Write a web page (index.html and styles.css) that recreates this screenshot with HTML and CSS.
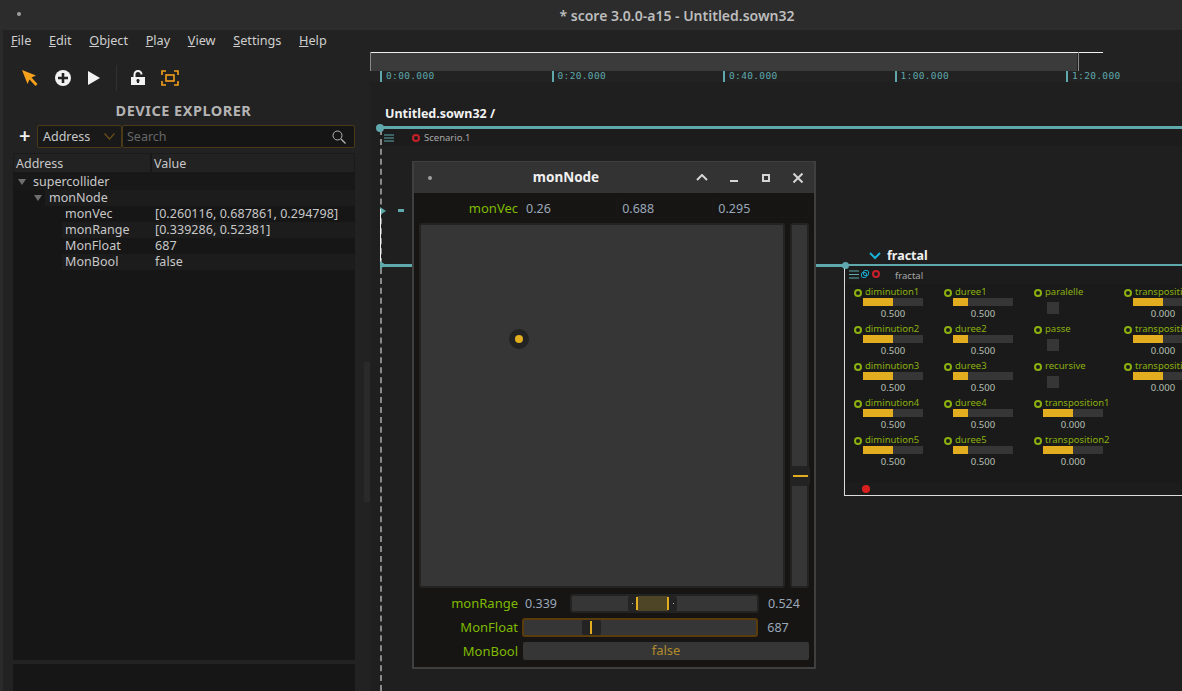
FILE: index.html
```html
<!DOCTYPE html>
<html lang="en">
<head>
    <meta charset="UTF-8">
    <title>score</title>
    <link rel="stylesheet" href="styles.css">
</head>
<body>
    <header class="titlebar">
        <span class="title-dot"></span>
        <span class="title-text">* score 3.0.0-a15 - Untitled.sown32</span>
    </header>

    <div class="app">
        <aside class="side">
            <nav class="menu">
                <span><u>F</u>ile</span>
                <span><u>E</u>dit</span>
                <span><u>O</u>bject</span>
                <span><u>P</u>lay</span>
                <span><u>V</u>iew</span>
                <span><u>S</u>ettings</span>
                <span><u>H</u>elp</span>
            </nav>

            <div class="toolbar">
                <svg class="tool" width="18" height="18" viewBox="0 0 18 18"><path d="M1 1 L15 6.5 L10.5 8.5 L16.5 15 L14.5 17 L8.5 10.5 L6.5 15 Z" fill="#f5a11c"/></svg>
                <svg class="tool" width="18" height="18" viewBox="0 0 18 18"><circle cx="9" cy="9" r="8" fill="#f2f2f2"/><path d="M9 4 V14 M4 9 H14" stroke="#222" stroke-width="2.6"/></svg>
                <svg class="tool" width="14" height="16" viewBox="0 0 14 16"><path d="M1 1 L13 8 L1 15 Z" fill="#f2f2f2"/></svg>
                <span class="tool-sep"></span>
                <svg class="tool" width="16" height="16" viewBox="0 0 16 16"><path d="M4.5 7 V4.5 A3.5 3.5 0 0 1 11.5 4.5" fill="none" stroke="#f2f2f2" stroke-width="2"/><path d="M1 7 H15 V15 H1 Z M8 9 A1.5 1.5 0 0 0 7 11.7 V13 H9 V11.7 A1.5 1.5 0 0 0 8 9 Z" fill="#f2f2f2" fill-rule="evenodd"/></svg>
                <svg class="tool" width="18" height="16" viewBox="0 0 18 16"><path d="M1 5 V1 H5 M13 1 H17 V5 M17 11 V15 H13 M5 15 H1 V11" fill="none" stroke="#f5a11c" stroke-width="1.6"/><rect x="5" y="5" width="8" height="6" fill="none" stroke="#f5a11c" stroke-width="1.6"/></svg>
            </div>

            <h2 class="side-title">DEVICE EXPLORER</h2>

            <div class="search-row">
                <span class="add-btn">+</span>
                <div class="select">Address
                    <svg width="11" height="7" viewBox="0 0 11 7"><path d="M0.5 0.5 L5.5 6 L10.5 0.5" fill="none" stroke="#6b4d16" stroke-width="1.2"/></svg>
                </div>
                <div class="search">Search
                    <svg width="14" height="14" viewBox="0 0 14 14"><circle cx="5.5" cy="5.5" r="4.5" fill="none" stroke="#b5b5b5"/><path d="M9 9 L13.5 13.5" stroke="#b5b5b5" stroke-width="1.3"/></svg>
                </div>
            </div>

            <div class="tree">
                <div class="tree-head">
                    <span class="col-addr">Address</span>
                    <span class="col-val">Value</span>
                </div>
                <div class="tree-row depth0"><i class="arrow"></i>supercollider</div>
                <div class="tree-row depth1"><i class="arrow"></i><span class="row-fill">monNode</span></div>
                <div class="tree-row depth2"><span class="leaf dark"><span class="leaf-name">monVec</span><span>[0.260116, 0.687861, 0.294798]</span></span></div>
                <div class="tree-row depth2"><span class="leaf"><span class="leaf-name">monRange</span><span>[0.339286, 0.52381]</span></span></div>
                <div class="tree-row depth2"><span class="leaf dark"><span class="leaf-name">MonFloat</span><span>687</span></span></div>
                <div class="tree-row depth2"><span class="leaf"><span class="leaf-name">MonBool</span><span>false</span></span></div>
            </div>
            <div class="side-bottom"></div>
            <span class="side-scroll"></span>
        </aside>

        <main class="timeline">
            <div class="minimap"><div class="minimap-bar"></div></div>
            <div class="ruler">
                <span class="tick">0:00.000</span>
                <span class="tick">0:20.000</span>
                <span class="tick">0:40.000</span>
                <span class="tick">1:00.000</span>
                <span class="tick">1:20.000</span>
            </div>
            <div class="crumb">Untitled.sown32 /</div>

            <section class="scenario">
                <div class="scenario-head">
                    <svg class="burger" width="10" height="8" viewBox="0 0 10 8"><path d="M0 1 H10 M0 4 H10 M0 7 H10" stroke="#5fa8ab"/></svg>
                    <span class="rec-ring"></span>
                    <span class="scenario-name">Scenario.1</span>
                </div>

                <!-- things on the scenario canvas -->
                <span class="dash-line"></span>
                <span class="start-dot"></span>
                <span class="state-mark top"></span>
                <span class="state-dash"></span>
                <span class="white-line"></span>
                <span class="state-mark low"></span>
                <span class="teal-line"></span>

                <div class="proc-title">
                    <svg width="12" height="8" viewBox="0 0 12 8"><path d="M1 1 L6 6 L11 1" fill="none" stroke="#19b1d8" stroke-width="2"/></svg>
                    fractal
                </div>

                <div class="process">
                    <span class="proc-dot"></span>
                    <div class="proc-head">
                        <svg width="10" height="9" viewBox="0 0 10 9"><path d="M0 1 H10 M0 4.5 H10 M0 8 H10" stroke="#5fa8ab"/></svg>
                        <svg width="8" height="8" viewBox="0 0 8 8"><rect x="0.5" y="2.5" width="5" height="5" rx="1.5" fill="none" stroke="#19a5c9"/><rect x="2.5" y="0.5" width="5" height="5" rx="1.5" fill="none" stroke="#19a5c9"/></svg>
                        <span class="rec-ring small"></span>
                        <span class="proc-name">fractal</span>
                    </div>
                    <div class="ports">
                        <div class="port"><i class="ring"></i><span class="port-name">diminution1</span><div class="bar"><b class="half"></b></div><div class="port-val">0.500</div></div>
                        <div class="port"><i class="ring"></i><span class="port-name">diminution2</span><div class="bar"><b class="half"></b></div><div class="port-val">0.500</div></div>
                        <div class="port"><i class="ring"></i><span class="port-name">diminution3</span><div class="bar"><b class="half"></b></div><div class="port-val">0.500</div></div>
                        <div class="port"><i class="ring"></i><span class="port-name">diminution4</span><div class="bar"><b class="half"></b></div><div class="port-val">0.500</div></div>
                        <div class="port"><i class="ring"></i><span class="port-name">diminution5</span><div class="bar"><b class="half"></b></div><div class="port-val">0.500</div></div>

                        <div class="port"><i class="ring"></i><span class="port-name">duree1</span><div class="bar"><b class="quarter"></b></div><div class="port-val">0.500</div></div>
                        <div class="port"><i class="ring"></i><span class="port-name">duree2</span><div class="bar"><b class="quarter"></b></div><div class="port-val">0.500</div></div>
                        <div class="port"><i class="ring"></i><span class="port-name">duree3</span><div class="bar"><b class="quarter"></b></div><div class="port-val">0.500</div></div>
                        <div class="port"><i class="ring"></i><span class="port-name">duree4</span><div class="bar"><b class="quarter"></b></div><div class="port-val">0.500</div></div>
                        <div class="port"><i class="ring"></i><span class="port-name">duree5</span><div class="bar"><b class="quarter"></b></div><div class="port-val">0.500</div></div>

                        <div class="port"><i class="ring"></i><span class="port-name">paralelle</span><div class="check"></div></div>
                        <div class="port"><i class="ring"></i><span class="port-name">passe</span><div class="check"></div></div>
                        <div class="port"><i class="ring"></i><span class="port-name">recursive</span><div class="check"></div></div>
                        <div class="port"><i class="ring"></i><span class="port-name">transposition1</span><div class="bar"><b class="half"></b></div><div class="port-val">0.000</div></div>
                        <div class="port"><i class="ring"></i><span class="port-name">transposition2</span><div class="bar"><b class="half"></b></div><div class="port-val">0.000</div></div>

                        <div class="port"><i class="ring"></i><span class="port-name">transposition3</span><div class="bar"><b class="half"></b></div><div class="port-val">0.000</div></div>
                        <div class="port"><i class="ring"></i><span class="port-name">transposition4</span><div class="bar"><b class="half"></b></div><div class="port-val">0.000</div></div>
                        <div class="port"><i class="ring"></i><span class="port-name">transposition5</span><div class="bar"><b class="half"></b></div><div class="port-val">0.000</div></div>
                    </div>
                    <div class="proc-foot"><span class="rec-dot"></span></div>
                </div>
            </section>
        </main>
    </div>

    <div class="window">
        <div class="win-title">
            <span class="title-dot"></span>
            <span class="win-name">monNode</span>
            <span class="win-btn"><svg width="12" height="7" viewBox="0 0 12 7"><path d="M1 6 L6 1 L11 6" fill="none" stroke="#d5d5d5" stroke-width="2"/></svg></span>
            <span class="win-btn"><svg width="8" height="8" viewBox="0 0 8 8"><rect width="8" height="2" y="6" fill="#d5d5d5"/></svg></span>
            <span class="win-btn"><svg width="8" height="8" viewBox="0 0 8 8"><rect x="1" y="1" width="6" height="6" fill="none" stroke="#d5d5d5" stroke-width="2"/></svg></span>
            <span class="win-btn"><svg width="10" height="10" viewBox="0 0 10 10"><path d="M0.5 0.5 L9.5 9.5 M9.5 0.5 L0.5 9.5" stroke="#d5d5d5" stroke-width="2"/></svg></span>
        </div>
        <div class="win-body">
            <div class="vec-row">
                <span class="ctl-label">monVec</span>
                <span class="num">0.26</span>
                <span class="num">0.688</span>
                <span class="num">0.295</span>
            </div>
            <div class="pad-row">
                <div class="xy-pad"><span class="pad-knob"></span></div>
                <div class="v-slider"><span class="v-knob"></span></div>
            </div>
            <div class="ctl-row">
                <span class="ctl-label">monRange</span>
                <span class="num-side first">0.339</span>
                <div class="track range-track">
                    <div class="range-knob"><i></i><i></i></div>
                </div>
                <span class="num-side">0.524</span>
            </div>
            <div class="ctl-row">
                <span class="ctl-label">MonFloat</span>
                <div class="track float-track"><div class="float-knob"><i></i></div></div>
                <span class="num-side">687</span>
            </div>
            <div class="ctl-row">
                <span class="ctl-label">MonBool</span>
                <div class="toggle">false</div>
            </div>
        </div>
    </div>
</body>
</html>
```

FILE: styles.css
```css
* {
    box-sizing: border-box;
}

html, body {
    height: 100%;
}

body {
    margin: 0;
    overflow: hidden;
    display: flex;
    flex-direction: column;
    position: relative;
    background-color: #222222;
    color: #c8c8c8;
    font-family: "Noto Sans", "Open Sans", sans-serif;
    font-size: 12.5px;
}

/* title bar */
.titlebar {
    height: 30px;
    flex-shrink: 0;
    display: flex;
    align-items: center;
    justify-content: center;
    position: relative;
    background-color: #2c2c2c;
}
.titlebar .title-dot {
    position: absolute;
    left: 17px;
    top: 12px;
}
.title-dot {
    width: 4px;
    height: 4px;
    border-radius: 50%;
    background-color: #a0a0a0;
}
.title-text {
    margin-left: 172px;
    font-size: 14px;
    font-weight: 600;
    color: #bdbdbd;
}

.app {
    flex: 1;
    display: flex;
    min-height: 0;
    border-left: 3px solid #2a2a2a;
}

/* left panel */
.side {
    position: relative;
    width: 367px;
    flex-shrink: 0;
    display: flex;
    flex-direction: column;
    padding-right: 15px;
    background-color: #222222;
}
.side-scroll {
    position: absolute;
    left: 361px;
    top: 332px;
    width: 6px;
    height: 140px;
    background-color: #2a2a2a;
}
.menu {
    height: 20px;
    display: flex;
    align-items: center;
    gap: 17.6px;
    padding-left: 8px;
    font-size: 12.7px;
    color: #cfcfcf;
}
.toolbar {
    height: 38px;
    margin-top: 9px;
    display: flex;
    align-items: center;
    padding-left: 18px;
}
.tool {
    margin-right: 15px;
}
.tool-sep {
    width: 1px;
    height: 26px;
    margin: 0 13px 0 0;
    background-color: #303030;
}
.side-title {
    margin: 4px 0 0;
    text-align: center;
    font-size: 14.5px;
    line-height: 18px;
    font-weight: 700;
    letter-spacing: 0.5px;
    color: #b4b4b4;
    padding-left: 9px;
}
.search-row {
    margin-top: 6px;
    height: 23px;
    display: flex;
    align-items: stretch;
}
.add-btn {
    width: 34px;
    padding-left: 16px;
    font-size: 20px;
    line-height: 21px;
    font-weight: 600;
    color: #f2f2f2;
}
.select {
    width: 85px;
    display: flex;
    align-items: center;
    justify-content: space-between;
    padding: 0 6px 0 5px;
    border: 1px solid #4a3a17;
    border-radius: 2px;
    background-color: #191919;
    color: #c8c8c8;
}
.search {
    flex: 1;
    display: flex;
    align-items: center;
    justify-content: space-between;
    padding: 0 8px 0 4px;
    border: 1px solid #4a3a17;
    border-radius: 2px;
    background-color: #151515;
    color: #666666;
}
.tree {
    flex: 1;
    margin: 5px 0 0 10px;
    background-color: #161616;
    line-height: 16px;
}
.tree-head {
    height: 20px;
    display: flex;
    align-items: flex-end;
    background-color: #222222;
    border: 1px solid #1a1a1a;
}
.col-addr {
    width: 138px;
    height: 100%;
    padding: 2px 0 0 2px;
    border-right: 2px solid #181818;
}
.col-val {
    padding-left: 2px;
}
.tree-row {
    height: 16px;
    display: flex;
    align-items: center;
    white-space: nowrap;
}
.arrow {
    width: 0;
    height: 0;
    margin-right: 5px;
    border-left: 4px solid transparent;
    border-right: 4px solid transparent;
    border-top: 6px solid #6f6f6f;
}
.depth0 {
    padding-left: 5px;
    margin-top: 1px;
    background-color: #181818;
}
.depth0 .arrow {
    margin-right: 7px;
}
.depth1 {
    padding-left: 21px;
}
.depth1 .arrow {
    margin-right: 3px;
}
.row-fill {
    flex: 1;
    height: 16px;
    padding-left: 4px;
    background-color: #1c1c1c;
}
.depth2 {
    padding-left: 49px;
}
.leaf {
    flex: 1;
    display: flex;
    height: 16px;
    letter-spacing: 0.05px;
    background-color: #1c1c1c;
}
.leaf.dark {
    background-color: #161616;
}
.leaf-name {
    width: 93px;
    padding-left: 3px;
}
.side-bottom {
    height: 27px;
    margin: 4px 0 0 10px;
    background-color: #161616;
}

/* timeline */
.timeline {
    flex: 1;
    min-width: 0;
    display: flex;
    flex-direction: column;
    background-color: #1f1f1f;
}
.minimap {
    height: 42px;
    padding-top: 22px;
    background-color: #222222;
}
.minimap-bar {
    position: relative;
    width: 707px;
    height: 19px;
    background-color: #3b3b3b;
}
/* white top edge runs past the grey bar */
.minimap-bar::before {
    content: "";
    position: absolute;
    left: 0;
    top: 0;
    width: 733px;
    height: 1px;
    background-color: #f0f0f0;
}
.minimap-bar::after {
    content: "";
    position: absolute;
    left: 0;
    top: 0;
    width: 707px;
    height: 19px;
    border-left: 1px solid #8a8a8a;
    border-right: 1px solid #8a8a8a;
}
.ruler {
    height: 11px;
    margin-top: -1px;
    padding-left: 10px;
    display: flex;
    background-color: #222222;
}
.tick {
    width: 171.5px;
    flex-shrink: 0;
    padding-left: 4px;
    border-left: 2px solid #5fa8ab;
    font-family: "DejaVu Sans Mono", monospace;
    font-size: 9.5px;
    line-height: 10px;
    letter-spacing: 0.35px;
    color: #5fa8ab;
}
.crumb {
    margin-top: 23px;
    height: 21px;
    padding-left: 15px;
    font-size: 12.5px;
    line-height: 18px;
    font-weight: 700;
    color: #f2f2f2;
}
.scenario {
    flex: 1;
    position: relative;
    border-top: 3px solid #5fa8ab;
    margin-left: 10px;
}
.scenario-head {
    height: 17px;
    display: flex;
    align-items: center;
    padding-left: 4px;
    background-color: #1c1c1c;
}
.burger {
    margin-right: 18px;
}
.rec-ring {
    width: 8px;
    height: 8px;
    border-radius: 50%;
    border: 2px solid #c8202a;
}
.scenario-name {
    margin-left: 4px;
    font-size: 9.5px;
    color: #a8a8a8;
}
.start-dot {
    position: absolute;
    left: -4px;
    top: -5px;
    width: 8px;
    height: 8px;
    border-radius: 50%;
    background-color: #5fa8ab;
}
.dash-line {
    position: absolute;
    left: 0;
    top: 0;
    bottom: 0;
    border-left: 2px dashed #8a8a8a;
}
.state-mark {
    position: absolute;
    left: 0;
    width: 0;
    height: 0;
    border-top: 4px solid transparent;
    border-bottom: 4px solid transparent;
    border-left: 6px solid #5fa8ab;
}
.state-mark.top {
    top: 78px;
}
.state-mark.low {
    top: 132px;
}
.state-dash {
    position: absolute;
    left: 18px;
    top: 80px;
    width: 6px;
    height: 3px;
    background-color: #5fa8ab;
}
.white-line {
    position: absolute;
    left: 0;
    top: 80px;
    width: 1px;
    height: 55px;
    background-color: #f0f0f0;
}
.teal-line {
    position: absolute;
    left: 1px;
    right: 0;
    top: 135px;
    height: 3px;
    background-color: #5fa8ab;
}
.proc-title {
    position: absolute;
    left: 489px;
    top: 119px;
    display: flex;
    align-items: center;
    gap: 6px;
    font-size: 12.5px;
    line-height: 16px;
    font-weight: 700;
    color: #f0f0f0;
}
.process {
    position: absolute;
    left: 464px;
    top: 137px;
    width: 340px;
    height: 230px;
    border-left: 1px solid #dcdcdc;
    border-bottom: 1px solid #dcdcdc;
    background-color: #1a1a1a;
}
.proc-dot {
    position: absolute;
    left: -3px;
    top: -4px;
    width: 7px;
    height: 7px;
    border-radius: 50%;
    background-color: #5fa8ab;
}
.proc-head {
    height: 18px;
    display: flex;
    align-items: center;
    gap: 2px;
    padding: 0 0 2px 4px;
    background-color: #1c1c1c;
}
.rec-ring.small {
    margin-left: 1px;
}
.proc-name {
    margin-left: 13px;
    padding-top: 3px;
    font-size: 9.5px;
    color: #a8a8a8;
}
.ports {
    height: 199px;
    padding: 2px 0 0 10px;
    display: grid;
    grid-auto-flow: column;
    grid-template-rows: repeat(5, 37px);
    grid-auto-columns: 90px;
    overflow: hidden;
}
.port {
    position: relative;
    padding-left: 10px;
    font-size: 9.5px;
    line-height: 12px;
    color: #8cb00f;
    white-space: nowrap;
}
.ring {
    position: absolute;
    left: -1px;
    top: 3px;
    width: 8px;
    height: 8px;
    border-radius: 50%;
    border: 2px solid #8cb00f;
}
.port-name {
    display: block;
}
.bar {
    width: 60px;
    height: 8px;
    margin: 0 0 0 -2px;
    background-color: #363636;
}
.bar b {
    display: block;
    height: 8px;
    background-color: #e2ae1f;
}
.bar b.half {
    width: 30px;
}
.bar b.quarter {
    width: 15px;
}
.port-val {
    width: 60px;
    margin-left: -2px;
    text-align: center;
    line-height: 15px;
    color: #b9c0b4;
}
.check {
    width: 12px;
    height: 12px;
    margin: 4px 0 0 2px;
    background-color: #363636;
}
.proc-foot {
    height: 12px;
    padding: 2px 0 0 17px;
    background-color: #1c1c1c;
}
.rec-dot {
    display: block;
    width: 8px;
    height: 8px;
    border-radius: 50%;
    background-color: #d8201f;
}

/* floating node window */
.window {
    position: absolute;
    left: 412px;
    top: 161px;
    width: 404px;
    height: 508px;
    display: flex;
    flex-direction: column;
    border: 2px solid #3f3f3f;
    border-top-width: 1px;
    background-color: #161514;
}
.win-title {
    height: 31px;
    flex-shrink: 0;
    display: flex;
    align-items: center;
    padding-left: 14px;
    background-color: #333333;
}
.win-name {
    flex: 1;
    text-align: center;
    font-size: 13.5px;
    line-height: 18px;
    margin-bottom: 2px;
    font-weight: 700;
    color: #f0f0f0;
    padding-left: 14px;
}
.win-btn {
    width: 32px;
    display: flex;
    justify-content: center;
    align-items: center;
}
.win-body {
    flex: 1;
    display: flex;
    flex-direction: column;
    padding: 3px 5px 0 5px;
    font-size: 12.5px;
}
.ctl-label {
    width: 99px;
    flex-shrink: 0;
    text-align: right;
    font-size: 13px;
    color: #7fba00;
}
.vec-row {
    height: 23px;
    display: flex;
    align-items: center;
    gap: 1.5px;
}
.vec-row .ctl-label {
    margin-right: 2.5px;
}
.num {
    width: 95px;
    height: 20px;
    padding-left: 3px;
    line-height: 19px;
    color: #9aa7b8;
    border: 1px solid #191816;
}
.pad-row {
    flex-shrink: 0;
    margin-top: 4px;
    display: flex;
    gap: 5px;
}
.xy-pad {
    position: relative;
    width: 367px;
    height: 365px;
    border: 2px solid #232323;
    border-radius: 3px;
    background-color: #363636;
}
.pad-knob {
    position: absolute;
    left: 88px;
    top: 104px;
    width: 20px;
    height: 20px;
    border-radius: 50%;
    border: 6px solid #232323;
    background-color: #e2ae1f;
}
.v-slider {
    position: relative;
    width: 19px;
    height: 365px;
    border: 2px solid #232323;
    border-radius: 3px;
    background-color: #363636;
}
.v-knob {
    position: absolute;
    left: -1px;
    top: 241px;
    width: 19px;
    height: 20px;
    border-radius: 3px;
    background-color: #232323;
}
.v-knob::after {
    content: "";
    position: absolute;
    left: 2px;
    right: 2px;
    top: 9px;
    height: 2px;
    background-color: #e2ae1f;
}
.ctl-row {
    height: 18px;
    margin-top: 6px;
    display: flex;
    align-items: center;
}
.num-side {
    width: 48px;
    padding-left: 6px;
    margin-left: 3px;
    color: #9aa7b8;
}
.num-side.first {
    width: 49px;
    margin-left: 4px;
    padding-left: 3px;
}
.track {
    position: relative;
    height: 19px;
    border: 2px solid #232323;
    border-radius: 3px;
    background-color: #363636;
}
.range-track {
    width: 189px;
    flex-shrink: 0;
}
.range-knob {
    position: absolute;
    left: 56px;
    top: 0;
    width: 49px;
    height: 15px;
    border-radius: 2px;
    background: linear-gradient(to right, #232323 9px, #4e4426 9px, #4e4426 40px, #232323 40px);
}
.range-knob::before,
.range-knob::after {
    content: "";
    position: absolute;
    top: 7px;
    width: 1px;
    height: 1px;
    background-color: #b5b5b5;
}
.range-knob::before {
    left: 4px;
}
.range-knob::after {
    left: 45px;
}
.range-knob i {
    position: absolute;
    top: 1px;
    width: 2px;
    height: 13px;
    background-color: #e2ae1f;
}
.range-knob i:first-child {
    left: 8px;
}
.range-knob i:last-child {
    left: 39px;
}
.float-track {
    width: 238px;
    margin-left: 4px;
    border-color: #5a3c0c;
}
.float-knob {
    position: absolute;
    left: 58px;
    top: 0;
    width: 19px;
    height: 15px;
    border-radius: 2px;
    background-color: #232323;
}
.float-knob i {
    position: absolute;
    left: 8px;
    top: 1px;
    width: 2px;
    height: 13px;
    background-color: #e2ae1f;
}
.toggle {
    flex: 1;
    height: 18px;
    margin-left: 5px;
    border-radius: 2px;
    text-align: center;
    line-height: 17px;
    font-size: 13px;
    background-color: #363636;
    color: #b08b2a;
}
```
